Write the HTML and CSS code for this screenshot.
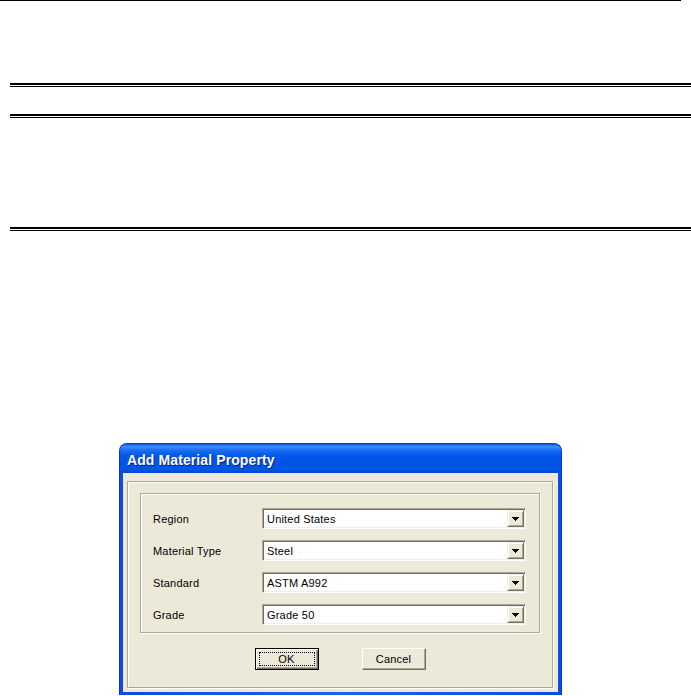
FILE: index.html
```html
<!DOCTYPE html>
<html lang="en">
<head>
  <meta charset="UTF-8">
  <title>Add Material Property</title>
  <link rel="stylesheet" href="styles.css">
</head>
<body>
  <div class="top-rule"></div>
  <div class="double-rule rule-a"></div>
  <div class="double-rule rule-b"></div>
  <div class="double-rule rule-c"></div>

  <div class="window">
    <div class="titlebar">Add Material Property</div>
    <div class="frame">
      <div class="panel">
        <div class="group">
          <div class="row">
            <label>Region</label>
            <div class="combo">
              <span class="combo-value">United States</span>
              <span class="drop"><svg width="7" height="4" viewBox="0 0 7 4" shape-rendering="crispEdges"><path d="M0 0h7v1h-1v1h-1v1h-1v1h-1v-1h-1v-1h-1v-1h-1z"/></svg></span>
            </div>
          </div>
          <div class="row">
            <label>Material Type</label>
            <div class="combo">
              <span class="combo-value">Steel</span>
              <span class="drop"><svg width="7" height="4" viewBox="0 0 7 4" shape-rendering="crispEdges"><path d="M0 0h7v1h-1v1h-1v1h-1v1h-1v-1h-1v-1h-1v-1h-1z"/></svg></span>
            </div>
          </div>
          <div class="row">
            <label>Standard</label>
            <div class="combo">
              <span class="combo-value">ASTM A992</span>
              <span class="drop"><svg width="7" height="4" viewBox="0 0 7 4" shape-rendering="crispEdges"><path d="M0 0h7v1h-1v1h-1v1h-1v1h-1v-1h-1v-1h-1v-1h-1z"/></svg></span>
            </div>
          </div>
          <div class="row">
            <label>Grade</label>
            <div class="combo">
              <span class="combo-value">Grade 50</span>
              <span class="drop"><svg width="7" height="4" viewBox="0 0 7 4" shape-rendering="crispEdges"><path d="M0 0h7v1h-1v1h-1v1h-1v1h-1v-1h-1v-1h-1v-1h-1z"/></svg></span>
            </div>
          </div>
        </div>

        <div class="button-row">
          <button class="btn btn-default"><span class="focus">OK</span></button>
          <button class="btn"><span class="focus-none">Cancel</span></button>
        </div>
      </div>
    </div>
  </div>
</body>
</html>
```

FILE: styles.css
```css
html, body {
  overflow: hidden;
}

body {
  margin: 0;
  background-color: #fff;
  font-family: 'Liberation Sans', Arial, sans-serif;
  font-size: 11px;
  letter-spacing: 0.2px;
  color: #000;
}

/* document rules behind the dialog */
.top-rule {
  width: 681px;
  height: 1px;
  background-color: #000;
}

.double-rule {
  margin-left: 10px;
  height: 1px;
  border-top: 2px solid #000;
  border-bottom: 1px solid #000;
}

.rule-a {
  margin-top: 82px;
}

.rule-b {
  margin-top: 27px;
}

.rule-c {
  margin-top: 109px;
}

/* XP style dialog */
.window {
  margin: 212px 0 0 119px;
  width: 443px;
  box-sizing: border-box;
  border: 1px solid #0831d9;
  border-bottom: none;
  border-radius: 8px 8px 0 0;
  background: linear-gradient(to right, #0a4fdf, #1565ee 50%, #0a4fdf);
  padding: 0 3px 3px;
}

.titlebar {
  margin: 0 -3px;
  height: 29px;
  padding: 2px 0 0 7px;
  box-sizing: border-box;
  display: flex;
  align-items: center;
  border-radius: 7px 7px 0 0;
  background: linear-gradient(to bottom, #0a5de6 0%, #3d8ffc 10%, #1e6ff5 20%, #0058e6 40%, #0054e3 70%, #0055e8 88%, #0047cc 100%);
  color: #fff;
  font-size: 14px;
  font-weight: bold;
  letter-spacing: 0.1px;
  text-shadow: 1px 1px #0a1d7a;
}

.frame {
  height: 219px;
  box-sizing: border-box;
  background-color: #ece9d8;
  padding: 8px 5px 4px 4px;
  display: flex;
}

.panel {
  flex: 1;
  border: 1px solid #aca899;
  box-shadow: 1px 1px 0 #fff, inset 1px 1px 0 #fff;
  padding: 11px 12px 0 12px;
}

.group {
  border: 1px solid #aca899;
  box-shadow: 1px 1px 0 #fff, inset 1px 1px 0 #fff;
  padding: 14px 13px 7px 12px;
  display: flex;
  flex-direction: column;
  gap: 11px;
}

.row {
  display: grid;
  grid-template-columns: 109px 1fr;
  align-items: center;
}

.combo {
  height: 21px;
  box-sizing: border-box;
  display: flex;
  align-items: stretch;
  background-color: #fff;
  border: 1px solid;
  border-color: #aca899 #fff #fff #aca899;
  box-shadow: inset 1px 1px 0 #716f64, inset -1px -1px 0 #f1efe2;
  padding: 1px;
}

.combo-value {
  flex: 1;
  display: flex;
  align-items: center;
  padding-left: 3px;
}

.drop {
  width: 17px;
  box-sizing: border-box;
  display: flex;
  align-items: center;
  justify-content: center;
  background-color: #ece9d8;
  border: 1px solid;
  border-color: #f1efe2 #716f64 #716f64 #f1efe2;
  box-shadow: inset 1px 1px 0 #fff, inset -1px -1px 0 #aca899;
  padding-top: 1px;
}

.drop svg {
  fill: #000;
}

.button-row {
  display: flex;
  justify-content: center;
  gap: 43px;
  margin-top: 15px;
}

.btn {
  width: 64px;
  height: 22px;
  box-sizing: border-box;
  margin: 0;
  padding: 3px;
  display: flex;
  background-color: #ece9d8;
  border: 1px solid;
  border-color: #fff #716f64 #716f64 #fff;
  box-shadow: inset -1px -1px 0 #aca899;
  font-family: 'Liberation Sans', Arial, sans-serif;
  font-size: 11px;
  letter-spacing: 0.2px;
  color: #000;
}

.btn-default {
  border-color: #000;
  box-shadow: inset 1px 1px 0 #fff, inset -1px -1px 0 #716f64, inset -2px -2px 0 #aca899;
}

.focus,
.focus-none {
  flex: 1;
  display: flex;
  align-items: center;
  justify-content: center;
  border: 1px dotted transparent;
}

.focus {
  border-color: #000;
}
```
